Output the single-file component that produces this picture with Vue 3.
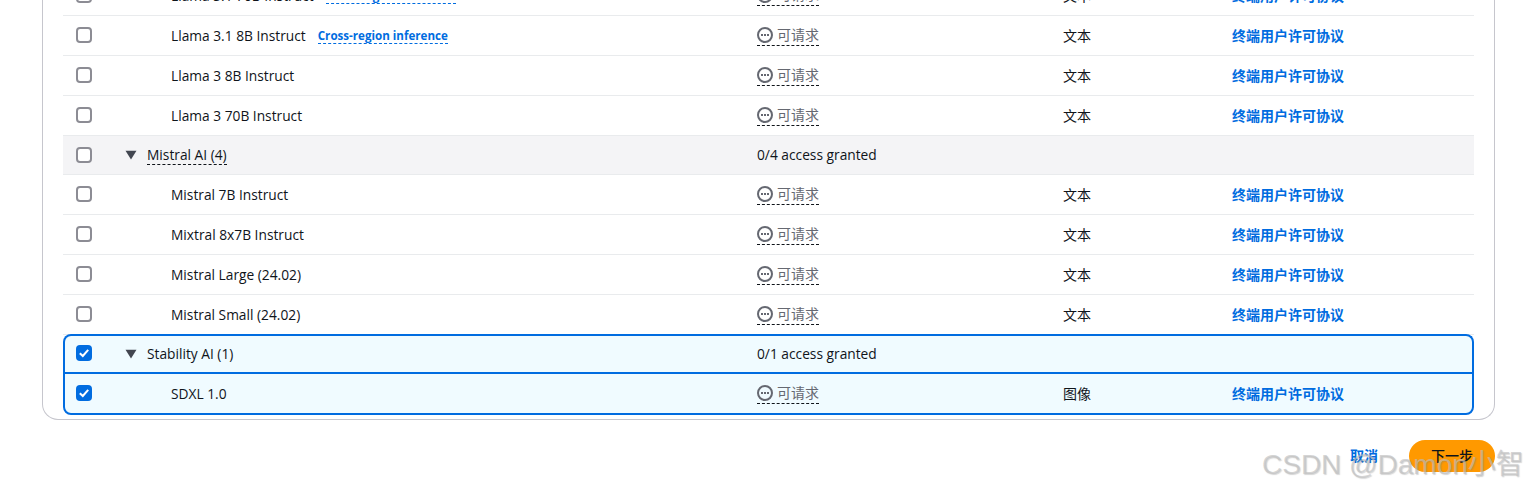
<script setup>
const rows = [
  { type: 'model', name: 'Llama 3.1 70B Instruct', cross: true, kind: '文本' },
  { type: 'model', name: 'Llama 3.1 8B Instruct', cross: true, kind: '文本' },
  { type: 'model', name: 'Llama 3 8B Instruct', kind: '文本' },
  { type: 'model', name: 'Llama 3 70B Instruct', kind: '文本' },
  { type: 'group', name: 'Mistral AI (4)', dashed: true, access: '0/4 access granted' },
  { type: 'model', name: 'Mistral 7B Instruct', kind: '文本' },
  { type: 'model', name: 'Mixtral 8x7B Instruct', kind: '文本' },
  { type: 'model', name: 'Mistral Large (24.02)', kind: '文本' },
  { type: 'model', name: 'Mistral Small (24.02)', kind: '文本' },
  { type: 'group', name: 'Stability AI (1)', access: '0/1 access granted', selected: true, first: true },
  { type: 'model', name: 'SDXL 1.0', kind: '图像', selected: true, last: true }
]
</script>

<template>
  <div class="page">
    <div class="card">
      <div
        v-for="row in rows"
        :key="row.name"
        class="row"
        :class="{ group: row.type === 'group', selected: row.selected, first: row.first, last: row.last }"
      >
        <div class="name-cell">
          <span class="check" :class="{ on: row.selected }">
            <svg v-if="row.selected" viewBox="0 0 16 16" width="16" height="16">
              <path d="M3.8 8.2 L6.8 11 L12.2 4.8" fill="none" stroke="#fff" stroke-width="2" />
            </svg>
          </span>
          <template v-if="row.type === 'group'">
            <svg class="caret" viewBox="0 0 12 10" width="12" height="10">
              <path d="M0.5 0.8 H11.5 L6 9.6 Z" fill="#424650" />
            </svg>
            <span class="group-name" :class="{ dashed: row.dashed }">{{ row.name }}</span>
          </template>
          <template v-else>
            <span class="model-name">{{ row.name }}</span>
            <span v-if="row.cross" class="cross">Cross-region inference</span>
          </template>
        </div>
        <div v-if="row.type === 'group'" class="access">{{ row.access }}</div>
        <template v-else>
          <div class="status-cell">
            <span class="status">
              <svg viewBox="0 0 16 16" width="16" height="16">
                <circle cx="8" cy="8" r="7" fill="none" stroke="#656871" stroke-width="2" />
                <rect x="4" y="7" width="2" height="2" fill="#656871" />
                <rect x="7" y="7" width="2" height="2" fill="#656871" />
                <rect x="10" y="7" width="2" height="2" fill="#656871" />
              </svg>
              <span class="status-text">可请求</span>
            </span>
          </div>
          <div class="kind">{{ row.kind }}</div>
          <div class="link">终端用户许可协议</div>
        </template>
      </div>
    </div>
    <div class="footer">
      <span class="cancel">取消</span>
      <span class="next">下一步</span>
    </div>
    <div class="watermark">CSDN @Damon小智</div>
  </div>
</template>

<style>
html, body { margin: 0; overflow: hidden; background: #fff; }
</style>

<style scoped>
.page {
  position: relative;
  height: 491px;
  overflow: hidden;
  font-family: "Open Sans", "Noto Sans CJK SC", sans-serif;
  font-size: 13.75px;
  color: #0f141a;
}
.card {
  box-sizing: border-box;
  width: 1453px;
  margin: -24px 0 0 42px;
  padding: 0 20px 4px;
  border: 1px solid #c6c6cd;
  border-top: 0;
  border-radius: 0 0 16px 16px;
}
.row {
  box-sizing: border-box;
  display: grid;
  grid-template-columns: 694px 306px 169px 1fr;
  align-items: center;
  height: 40px;
  border-bottom: 1px solid #e9ebed;
}
.row.group { background: #f4f4f6; grid-template-columns: 694px 1fr; height: 39px; }
.row.selected { background: #f0fbff; border: 2px solid #006ce0; }
.row.selected.first {
  grid-template-columns: 692px 1fr;
  border-radius: 8px 8px 0 0;
  border-bottom: 0;
  height: 38px;
  margin-top: -1px;
}
.row.selected.last {
  grid-template-columns: 692px 306px 169px 1fr;
  border-radius: 0 0 8px 8px;
  height: 43px;
}
.row.selected .name-cell { margin-left: -2px; }
.name-cell { display: flex; align-items: center; padding-left: 13px; }
.check {
  box-sizing: border-box;
  width: 16px;
  height: 16px;
  margin-top: -2px;
  border: 2px solid #8c8c94;
  border-radius: 4px;
  background: #fff;
  flex: none;
  display: flex;
}
.row.group:not(.selected) .check { margin-top: 0; }
.check.on { background: #006ce0; border: 0; }
.caret { margin-left: 33px; }
.group-name { margin-left: 10px; }
.row.first .group-name { margin-top: -2px; }
.group-name.dashed { border-bottom: 1px dashed #0f141a; line-height: 18px; }
.access { margin-bottom: 2px; }
.model-name { margin-left: 79px; }
.cross {
  margin-left: 12px;
  font-size: 11.6px;
  font-weight: 700;
  color: #006ce0;
  border-bottom: 1px dashed #006ce0;
}
.status-cell { margin-top: 1px; }
.status {
  display: inline-flex;
  align-items: center;
  gap: 4px;
  color: #656871;
  border-bottom: 1px dashed #0f141a;
  padding-bottom: 1px;
  line-height: 18px;
}
.status-text { font-size: 14px; }
.link { font-weight: 700; color: #006ce0; font-size: 14px; margin-bottom: 2px; }
.kind { font-size: 14px; margin-bottom: 2px; }
.footer {
  display: flex;
  justify-content: flex-end;
  align-items: center;
  gap: 31px;
  margin-top: 20px;
  padding-right: 33px;
}
.cancel { font-weight: 700; color: #006ce0; font-size: 14px; padding-bottom: 3px; }
.next {
  box-sizing: border-box;
  width: 86px;
  height: 32px;
  padding-bottom: 2px;
  border-radius: 16px;
  background: #ff9900;
  display: flex;
  align-items: center;
  justify-content: center;
  font-size: 14px;
  font-weight: 500;
}
.watermark {
  position: absolute;
  left: 1262px;
  top: 445px;
  font-family: "Liberation Sans", "Noto Sans CJK SC", sans-serif;
  font-size: 28px;
  line-height: 40px;
  white-space: nowrap;
  color: rgba(190, 190, 190, 0.65);
  text-shadow: 1px 1px 1px rgba(120, 120, 120, 0.3);
}
</style>
